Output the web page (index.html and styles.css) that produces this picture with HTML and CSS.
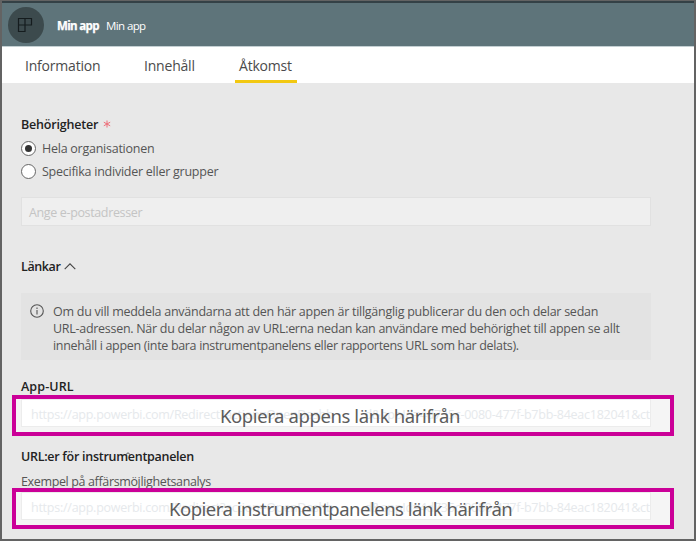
FILE: index.html
```html
<!DOCTYPE html>
<html lang="sv">
<head>
<meta charset="utf-8">
<title>Min app</title>
<link rel="stylesheet" href="styles.css">
</head>
<body>
<div class="window">
  <header class="header">
    <div class="logo">
      <svg width="16" height="16" viewBox="0 0 16 16" fill="none" stroke="#151c1e" stroke-width="1.2"><path d="M1.5 1.5H14.5V8H8V14.5H1.5ZM8 1.5V8H1.5"/></svg>
    </div>
    <strong class="app-name"><span>Min app</span></strong>
    <span class="app-sub">Min app</span>
  </header>
  <nav class="tabs">
    <a class="tab tab-info"><span>Information</span></a>
    <a class="tab tab-content"><span>Innehåll</span></a>
    <a class="tab tab-access active"><span>Åtkomst</span></a>
  </nav>
  <main class="content">
    <h2 class="title permissions"><span>Behörigheter</span><svg class="required" width="8" height="8" viewBox="0 0 8 8" stroke="#ee6d78" stroke-width="1"><path d="M4 .5V7.5M.8 2.2L7.2 5.8M7.2 2.2L.8 5.8"/></svg></h2>
    <label class="option"><i class="radio checked"></i><span class="t-org">Hela organisationen</span></label>
    <label class="option"><i class="radio"></i><span class="t-spec">Specifika individer eller grupper</span></label>
    <div class="email"><span>Ange e-postadresser</span></div>
    <h2 class="title links"><span>Länkar</span><svg width="12" height="7" viewBox="0 0 12 7" fill="none" stroke="#444" stroke-width="1.1"><path d="M.7 6.2L6 .9L11.3 6.2"/></svg></h2>
    <section class="notice">
      <svg width="14" height="14" viewBox="0 0 14 14" fill="none" stroke="#555" stroke-width="1.1"><circle cx="7" cy="7" r="6.3"/><path d="M7 6V10.4M7 3.6V4.9"/></svg>
      <p><span class="l1">Om du vill meddela användarna att den här appen är tillgänglig publicerar du den och delar sedan</span><br><span class="l2">URL-adressen. När du delar någon av URL:erna nedan kan användare med behörighet till appen se allt</span><br><span class="l3">innehåll i appen (inte bara instrumentpanelens eller rapportens URL som har delats).</span></p>
    </section>
    <h2 class="title app-url"><span>App-URL</span></h2>
    <div class="callout">
      <div class="url"><span>https://app.powerbi.com/Redirect?action=OpenDashb</span><span>d&amp;appId=4d735c-0080-477f-b7bb-84eac182041&amp;ct</span></div>
      <div class="caption"><span class="c1">Kopiera appens länk härifrån</span></div>
    </div>
    <h2 class="title panel-url"><span>URL:er för instrumentpanelen</span><svg class="pointer" width="6" height="4" viewBox="0 0 6 4" fill="none" stroke="#444" stroke-width=".9"><path d="M.5 3L3 .7L5.5 3"/></svg></h2>
    <p class="example"><span>Exempel på affärsmöjlighetsanalys</span></p>
    <div class="callout second">
      <div class="url"><span>https://app.powerbi.com/Redirect?action=OpenDashb</span><span>d&amp;appId=4d735c-0080-477f-b7bb-84eac182041&amp;ct</span></div>
      <div class="caption"><span class="c2">Kopiera instrumentpanelens länk härifrån</span></div>
    </div>
  </main>
</div>
</body>
</html>
```
FILE: styles.css
```css
* { box-sizing: border-box; }
body { margin: 0; font: 12.5px/17px "Open Sans", "Noto Sans", sans-serif; color: #555; }
.window { width: 696px; height: 541px; overflow: hidden; border: solid #636363; border-width: 1px 2px 2px; background: #e8e8e8; }
span { white-space: nowrap; }
.header { height: 46px; display: flex; align-items: center; padding-left: 6px; background: #5e747a; border-top: 2px solid #344146; border-bottom: 1px solid #c4d0d3; color: #fff; font-size: 11.5px; padding-top: 1px; }
.logo { width: 36px; height: 36px; border-radius: 50%; background: #3c4a4d; display: grid; place-items: center; }
.logo svg { margin-right: 2px; margin-bottom: 1px; }
.app-name { width: 49px; margin-left: 13px; letter-spacing: -.65px; -webkit-text-stroke: .25px; }
.app-sub { letter-spacing: -.6px; }
.tabs { height: 36px; display: flex; background: #fff; padding-left: 23px; font-size: 14px; line-height: 37px; color: #4b4b4b; letter-spacing: -.2px; }
.tab-info { width: 119px; }
.tab-content { width: 91px; }
.tab-access { width: 62px; padding-left: 4px; }
.active { border-bottom: 3px solid #f2c811; }
.content { padding: 32px 44px 0 19px; }
.title { margin: 0; height: 18px; font-size: 12.5px; line-height: 18px; font-weight: 600; color: #222; display: flex; align-items: center; letter-spacing: -.15px; }
.title span { position: relative; top: 1px; }
.required { margin-left: 5px; }
.option { display: flex; align-items: center; height: 23px; line-height: 18px; letter-spacing: -.25px; }
.option span { padding-top: 1px; }
.permissions { margin-bottom: 4px; }
.permissions span { letter-spacing: -.2px; }
.radio { width: 15px; height: 15px; border: 1px solid #666; border-radius: 50%; background: #fff; margin-right: 6px; display: grid; place-items: center; }
.checked::after { content: ""; width: 7px; height: 7px; border-radius: 50%; background: #333; }
.email { width: 630px; height: 29px; margin-top: 14px; padding-left: 7px; line-height: 30px; border: 1px solid #e1e1e1; background: #efefef; color: #c4c4c4; letter-spacing: -.36px; }
.links { margin-top: 31px; letter-spacing: -.4px; }
.links svg { margin-left: 4px; }
.notice { width: 630px; height: 67px; margin-top: 18px; padding: 10px 9px; background: #e3e3e3; display: flex; gap: 9px; }
.notice svg { flex: none; margin-top: 1px; }
.notice p { margin: 0; line-height: 17px; }
.l1 { letter-spacing: -.265px; }
.l2 { letter-spacing: -.285px; }
.l3 { letter-spacing: -.33px; }
.app-url { margin-top: 18px; letter-spacing: .1px; }
.app-url span, .panel-url span { top: 0; }
.callout { position: relative; width: 662px; height: 41px; margin: -1px 0 0 -9px; border: 4px solid #cb0098; background: #f5f5f5; padding-left: 5px; }
.url { width: 630px; height: 28px; border: 1px solid #ececec; background: #fff; display: flex; justify-content: space-between; padding-left: 9px; color: #e6e9ec; line-height: 29px; overflow: hidden; letter-spacing: -.25px; }
.caption { position: absolute; inset: 0; display: flex; color: #5c5c5c; font: 18.5px/33px "Noto Sans", sans-serif; }
.c1 { margin-left: 204px; letter-spacing: -.4px; }
.c2 { margin-left: 153px; letter-spacing: -.5px; }
.panel-url { position: relative; margin-top: 12px; letter-spacing: -.28px; }
.pointer { position: absolute; left: 104px; top: 4px; }
.example { margin: 7px 0 0; letter-spacing: -.36px; }
.second { margin-top: -2px; }
```
